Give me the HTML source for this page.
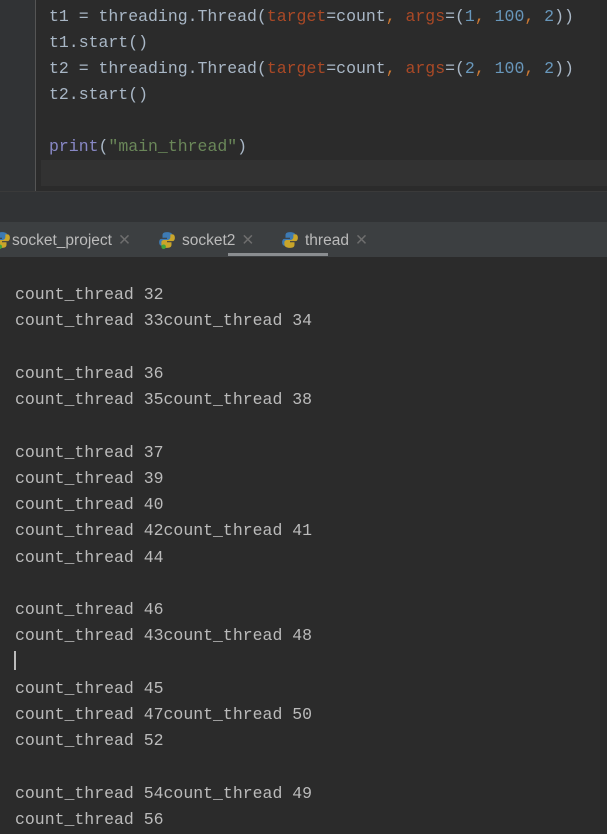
<!DOCTYPE html>
<html><head><style>
body{margin:0;width:607px;height:834px;overflow:hidden;background:#2b2b2b;position:relative;font-family:"Liberation Mono",monospace;}
.ed{position:absolute;left:0;top:0;width:607px;height:191px;background:#2b2b2b;}
.gut{position:absolute;left:0;top:0;width:35px;height:191px;background:#313335;border-right:1px solid #555;}
.cl{position:absolute;left:41px;top:160px;width:566px;height:26px;background:#323232;}
.code{position:absolute;left:49px;top:4px;font-size:16.5px;line-height:25.9px;color:#a9b7c6;white-space:pre;}
.o{color:#cc7832}.n{color:#6897bb}.p{color:#8888c6}.s{color:#6a8759}.a{color:#aa4926}
.mid{position:absolute;left:0;top:191px;width:607px;height:31px;background:#313335;border-top:1px solid #3a3a3a;}
.tabs{position:absolute;left:0;top:222px;width:607px;height:35px;background:#3c3f41;}
.tab{position:absolute;top:9px;font-family:"Liberation Sans",sans-serif;font-size:15.5px;color:#bbbbbb;}
.x{color:#6e6e6e;margin-left:6px;}
.ul{position:absolute;left:228px;top:31px;width:100px;height:3px;background:#8a8d90;}
.ic{position:absolute;top:9px;width:18px;height:18px;}
.con{position:absolute;left:15px;top:282px;font-size:16.5px;line-height:26.25px;color:#bbbbbb;white-space:pre;}
.cur{position:absolute;left:14px;top:651px;width:2px;height:19px;background:#bbbbbb;}
</style></head><body>
<div class="ed"><div class="gut"></div><div class="cl"></div>
<div class="code">t1 = threading.Thread(<span class="a">target</span>=count<span class="o">, </span><span class="a">args</span>=(<span class="n">1</span><span class="o">, </span><span class="n">100</span><span class="o">, </span><span class="n">2</span>))
t1.start()
t2 = threading.Thread(<span class="a">target</span>=count<span class="o">, </span><span class="a">args</span>=(<span class="n">2</span><span class="o">, </span><span class="n">100</span><span class="o">, </span><span class="n">2</span>))
t2.start()

<span class="p">print</span>(<span class="s">"main_thread"</span>)</div></div>
<div class="mid"></div>
<div class="tabs">
<svg class="ic" style="left:-7px" viewBox="0 0 16 16"><path d="M8 1C4 1 4 3 4 4v2h4v1H3C1 7 1 10 1 10c0 3 2 3 2 3h2v-2c0-2 1-3 3-3h3c1 0 2-1 2-2V4c0-2-2-3-5-3z" fill="#3d7ab3"/><path d="M8 15c4 0 4-2 4-3v-2H8V9h5c2 0 2-3 2-3 0-3-2-3-2-3h-2v2c0 2-1 3-3 3H5C4 8 3 9 3 10v2c0 2 2 3 5 3z" fill="#c9a52a"/><circle cx="6" cy="14" r="2" fill="#3fa33a"/></svg>
<div class="tab" style="left:12px">socket_project<span class="x">✕</span></div>
<svg class="ic" style="left:158px" viewBox="0 0 16 16"><path d="M8 1C4 1 4 3 4 4v2h4v1H3C1 7 1 10 1 10c0 3 2 3 2 3h2v-2c0-2 1-3 3-3h3c1 0 2-1 2-2V4c0-2-2-3-5-3z" fill="#3d7ab3"/><path d="M8 15c4 0 4-2 4-3v-2H8V9h5c2 0 2-3 2-3 0-3-2-3-2-3h-2v2c0 2-1 3-3 3H5C4 8 3 9 3 10v2c0 2 2 3 5 3z" fill="#c9a52a"/><circle cx="5" cy="14" r="2" fill="#3fa33a"/></svg>
<div class="tab" style="left:182px">socket2<span class="x">✕</span></div>
<svg class="ic" style="left:281px" viewBox="0 0 16 16"><path d="M8 1C4 1 4 3 4 4v2h4v1H3C1 7 1 10 1 10c0 3 2 3 2 3h2v-2c0-2 1-3 3-3h3c1 0 2-1 2-2V4c0-2-2-3-5-3z" fill="#3d7ab3"/><path d="M8 15c4 0 4-2 4-3v-2H8V9h5c2 0 2-3 2-3 0-3-2-3-2-3h-2v2c0 2-1 3-3 3H5C4 8 3 9 3 10v2c0 2 2 3 5 3z" fill="#c9a52a"/></svg>
<div class="tab" style="left:305px">thread<span class="x">✕</span></div>
<div class="ul"></div>
</div>
<div class="con">count_thread 32
count_thread 33count_thread 34

count_thread 36
count_thread 35count_thread 38

count_thread 37
count_thread 39
count_thread 40
count_thread 42count_thread 41
count_thread 44

count_thread 46
count_thread 43count_thread 48

count_thread 45
count_thread 47count_thread 50
count_thread 52

count_thread 54count_thread 49
count_thread 56</div>
<div class="cur"></div>
</body></html>
